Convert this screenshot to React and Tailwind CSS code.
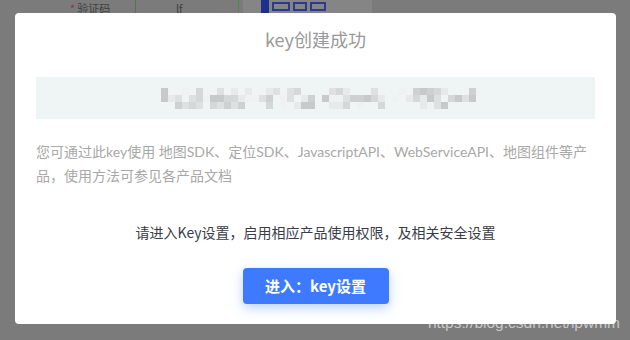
import { useMemo } from "react";

const FONT = { fontFamily: '"Noto Sans CJK SC", "Noto Sans", sans-serif' };

// blurred key: 3 rows of 7px mosaic cells
function useMosaic(cols) {
  return useMemo(() => {
    let s = 17;
    const rnd = () => {
      s = (s * 9301 + 49297) % 233280;
      return s / 233280;
    };
    const shades = ["#eef2f2", "#e6eaea", "#dde1e1", "#d4d8d8", "#cdd1d1", "#c6caca"];
    return [0, 1, 2].map((r) =>
      Array.from({ length: cols }, () => {
        const v = rnd();
        const empty = r === 1 ? v < 0.1 : v < 0.45;
        return empty ? "transparent" : shades[Math.floor(rnd() * shades.length)];
      })
    );
  }, [cols]);
}

function KeyMosaic() {
  const rows = useMosaic(45);
  return (
    <div className="flex flex-col">
      {rows.map((row, i) => (
        <div key={i} className="flex">
          {row.map((c, j) => (
            <div key={j} className="h-[7px] w-[7px]" style={{ background: c }} />
          ))}
        </div>
      ))}
    </div>
  );
}

export default function App() {
  return (
    <div className="h-[340px] w-[630px] overflow-hidden bg-[#7b7b7b]" style={FONT}>
      {/* page behind the overlay */}
      <div className="flex h-[13px] items-start overflow-hidden">
        <div className="w-[70px]" />
        <div className="flex w-[65px] items-start gap-[2px] pt-[3px] text-[11px] leading-[11px] text-[#3f3f3f]">
          <span className="text-[#8a3a3a]">*</span>
          <span>验证码</span>
        </div>
        <div className="h-[13px] w-px bg-[#5d6e5d]" />
        <div className="w-[40px]" />
        <div className="pt-[3px] text-[11px] leading-[11px] text-[#3f3f3f]">lf</div>
        <div className="w-[55px]" />
        <div className="h-[13px] w-px bg-[#4d8a4d]" />
        <div className="ml-[4px] flex h-[13px] w-[129px] items-start bg-[#858585] pl-[18px]">
          <div className="flex gap-[3px]">
            <div className="h-[13px] w-[8px] bg-[#1d2f8f]" />
            <div className="mt-[2px] h-[9px] w-[18px] border-[2px] border-[#2a3a90]" />
            <div className="mt-[2px] h-[9px] w-[14px] border-[2px] border-[#2a3a90]" />
            <div className="mt-[2px] h-[9px] w-[16px] border-[2px] border-[#2a3a90]" />
          </div>
        </div>
      </div>

      {/* dialog */}
      <div className="relative ml-[15px] flex h-[311px] w-[601px] flex-col items-center rounded-[4px] bg-white px-[21px] pt-[14px]">
        <h2 className="text-[18px] leading-[24px] font-normal text-[#999999]">key创建成功</h2>

        <div className="mt-[26px] flex h-[42px] w-full items-center justify-center bg-[#eff4f4] pl-[5px]">
          <KeyMosaic />
        </div>

        <p
          className="mt-[21px] w-full text-[14px] leading-[24px] text-[#a8a8a8]"
          style={{ fontFamily: 'Lato, "Noto Sans CJK SC", sans-serif' }}
        >
          您可通过此key使用 地图SDK、定位SDK、JavascriptAPI、WebServiceAPI、地图组件等产
          <br />
          品，使用方法可参见各产品文档
        </p>

        <p className="mt-[33px] text-[14px] leading-[22px] text-[#3a3d47]">
          请进入Key设置，启用相应产品使用权限，及相关安全设置
        </p>

        <button className="mt-[25px] h-[36px] w-[146px] rounded-[4px] bg-[#3d7aff] text-[15px] font-semibold text-white shadow-[0_4px_12px_rgba(61,122,255,0.35)]">
          进入：key设置
        </button>

        <span
          className="absolute right-[-4px] bottom-[-8px] text-[15.5px] leading-[18px] text-white/60"
          style={{ fontFamily: '"Liberation Sans", sans-serif' }}
        >
          https://blog.csdn.net/lpwmm
        </span>
      </div>
    </div>
  );
}
